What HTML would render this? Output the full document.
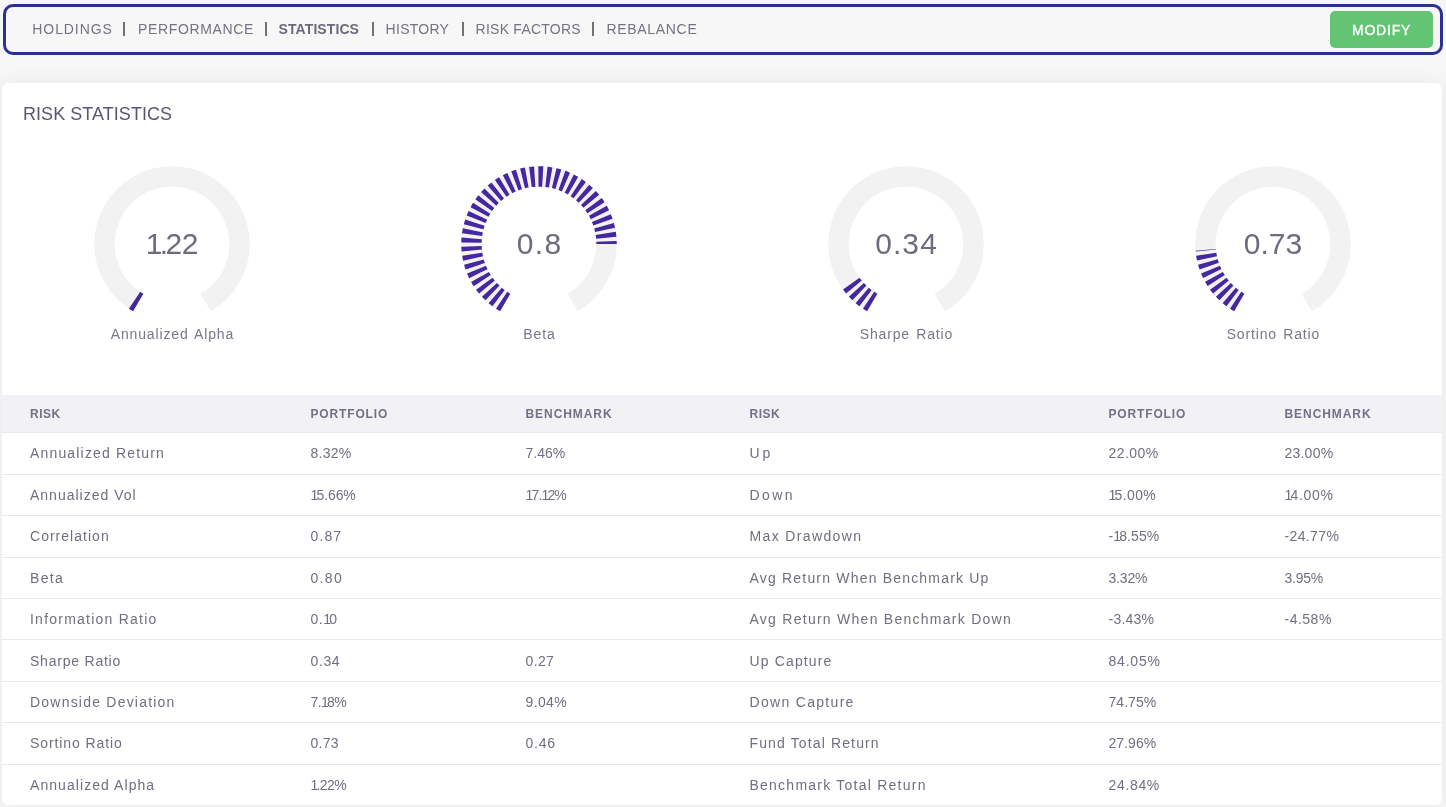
<!DOCTYPE html>
<html><head><meta charset="utf-8"><title>Risk Statistics</title>
<style>
html,body{margin:0;padding:0}
body{width:1446px;height:807px;overflow:hidden;background:#f7f7f7;position:relative;font-family:"Liberation Sans",sans-serif}
.t{position:absolute;line-height:0;white-space:nowrap}
.layer{position:absolute;left:0;top:0;width:1446px;height:807px;will-change:transform}
.nav{color:#757383}
.nav.b{font-weight:bold;color:#6b697c}
.navbar{position:absolute;left:3px;top:4px;width:1434px;height:45px;border:3px solid #2d3192;border-radius:10px;background:#f7f7f7}
.sep{position:absolute;top:22px;width:2px;height:14px;background:#717171}
.btn{position:absolute;left:1330px;top:11px;width:103px;height:37px;background:#63c574;border-radius:5px}
.btntxt{color:#fff;font-weight:normal;-webkit-text-stroke:0.35px #fff}
.card{position:absolute;left:2px;top:83px;width:1440px;height:722px;background:#fff;border-radius:6px;box-shadow:0 0 20px rgba(0,0,0,0.07)}
.title{color:#5c5574}
svg{position:absolute;left:0;top:0}
.gv{position:absolute;width:200px;text-align:center;font-size:30px;line-height:0;color:#6d6b7e}
.gl{position:absolute;width:200px;text-align:center;font-size:14px;line-height:0;color:#78768a;letter-spacing:0.85px;word-spacing:1.5px;text-indent:0.85px}
.hbg{position:absolute;left:2px;top:395px;width:1440px;height:37px;background:#f1f1f6}
.rb{position:absolute;left:2px;width:1440px;height:1px;background:#e9e8f0}
.hd{font-weight:bold;color:#737186}
.lab{color:#706e82}
.num{color:#706e82}
.num .o{letter-spacing:-1.8px}

</style></head><body><div class="layer">
<div class="navbar"></div>
<div class="t nav " style="left:32.30px;top:29.15px;font-size:14px;letter-spacing:0.92px">HOLDINGS</div><div class="t nav " style="left:138.00px;top:29.15px;font-size:14px;letter-spacing:0.64px">PERFORMANCE</div><div class="t nav b" style="left:278.60px;top:29.15px;font-size:14px;letter-spacing:0.08px">STATISTICS</div><div class="t nav " style="left:385.60px;top:29.15px;font-size:14px;letter-spacing:0.27px">HISTORY</div><div class="t nav " style="left:475.60px;top:29.15px;font-size:14px;letter-spacing:0.24px">RISK FACTORS</div><div class="t nav " style="left:606.40px;top:29.15px;font-size:14px;letter-spacing:0.69px">REBALANCE</div><div class="sep" style="left:123px"></div><div class="sep" style="left:265px"></div><div class="sep" style="left:372px"></div><div class="sep" style="left:462px"></div><div class="sep" style="left:592px"></div>
<div class="btn"></div>
<div class="t btntxt" style="left:1352.00px;top:30.15px;font-size:14px;letter-spacing:0.78px">MODIFY</div>
<div class="card"></div>
<div class="t title" style="left:23.00px;top:113.76px;font-size:18px;letter-spacing:0.05px">RISK STATISTICS</div>
<svg width="1446" height="807" viewBox="0 0 1446 807">
<path d="M138.225 302.500A67.55 67.55 0 1 1 205.775 302.500" stroke="#f2f2f2" stroke-width="20.4" fill="none"/><path d="M138.225 302.500A67.55 67.55 0 0 1 134.227 300.001" stroke="#4527a0" stroke-width="20.4" fill="none" stroke-dasharray="4.3 3.7"/><path d="M505.225 302.500A67.55 67.55 0 1 1 572.775 302.500" stroke="#f2f2f2" stroke-width="20.4" fill="none"/><path d="M505.225 302.500A67.55 67.55 0 1 1 606.550 244.000" stroke="#4527a0" stroke-width="20.4" fill="none" stroke-dasharray="4.3 3.7"/><path d="M872.225 302.500A67.55 67.55 0 1 1 939.775 302.500" stroke="#f2f2f2" stroke-width="20.4" fill="none"/><path d="M872.225 302.500A67.55 67.55 0 0 1 849.999 281.773" stroke="#4527a0" stroke-width="20.4" fill="none" stroke-dasharray="4.3 3.7"/><path d="M1239.225 302.500A67.55 67.55 0 1 1 1306.775 302.500" stroke="#f2f2f2" stroke-width="20.4" fill="none"/><path d="M1239.225 302.500A67.55 67.55 0 0 1 1205.707 249.887" stroke="#4527a0" stroke-width="20.4" fill="none" stroke-dasharray="4.3 3.7"/>
</svg>
<div class="gv" style="left:72px;top:243.80px;text-indent:-0.5px"><span style="letter-spacing:-2.6px">1</span><span style="letter-spacing:-2.6px">.</span><span style="letter-spacing:-0.5px">22</span></div><div class="gl" style="left:72px;top:334.05px">Annualized Alpha</div><div class="gv" style="left:439px;top:243.80px;letter-spacing:1.39px;text-indent:1.39px">0.8</div><div class="gl" style="left:439px;top:334.05px">Beta</div><div class="gv" style="left:806px;top:243.80px;letter-spacing:1.1px;text-indent:1.1px">0.34</div><div class="gl" style="left:806px;top:334.05px">Sharpe Ratio</div><div class="gv" style="left:1173px;top:243.80px;letter-spacing:0.0px;text-indent:0.0px">0.73</div><div class="gl" style="left:1173px;top:334.05px">Sortino Ratio</div>
<div class="hbg"></div>
<div class="rb" style="top:432px"></div>
<div class="t hd" style="left:30.00px;top:414.34px;font-size:12px;letter-spacing:0.5px">RISK</div><div class="t hd" style="left:310.50px;top:414.34px;font-size:12px;letter-spacing:0.85px">PORTFOLIO</div><div class="t hd" style="left:525.50px;top:414.34px;font-size:12px;letter-spacing:0.93px">BENCHMARK</div><div class="t hd" style="left:749.50px;top:414.34px;font-size:12px;letter-spacing:0.5px">RISK</div><div class="t hd" style="left:1108.50px;top:414.34px;font-size:12px;letter-spacing:0.85px">PORTFOLIO</div><div class="t hd" style="left:1284.50px;top:414.34px;font-size:12px;letter-spacing:0.93px">BENCHMARK</div>
<div class="t lab" style="left:30.00px;top:452.95px;font-size:14px;letter-spacing:1.169px">Annualized Return</div><div class="t num" style="left:310.50px;top:452.95px;font-size:14px;letter-spacing:0.225px">8.32%</div><div class="t num" style="left:525.50px;top:452.95px;font-size:14px;letter-spacing:-0.025px">7.46%</div><div class="t lab" style="left:749.50px;top:452.95px;font-size:14px;letter-spacing:2.89px">Up</div><div class="t num" style="left:1108.50px;top:452.95px;font-size:14px;letter-spacing:0.42px">22.00%</div><div class="t num" style="left:1284.50px;top:452.95px;font-size:14px;letter-spacing:0.22px">23.00%</div><div class="rb" style="top:474px"></div><div class="t lab" style="left:30.00px;top:494.51px;font-size:14px;letter-spacing:0.999px">Annualized Vol</div><div class="t num" style="left:310.50px;top:494.51px;font-size:14px;letter-spacing:-0.1px"><span class="o">1</span>5.66%</div><div class="t num" style="left:525.50px;top:494.51px;font-size:14px;letter-spacing:-0.9px"><span class="o">1</span>7.<span class="o">1</span>2%</div><div class="t lab" style="left:749.50px;top:494.51px;font-size:14px;letter-spacing:2.398px">Down</div><div class="t num" style="left:1108.50px;top:494.51px;font-size:14px;letter-spacing:0.4px"><span class="o">1</span>5.00%</div><div class="t num" style="left:1284.50px;top:494.51px;font-size:14px;letter-spacing:0.68px"><span class="o">1</span>4.00%</div><div class="rb" style="top:515px"></div><div class="t lab" style="left:30.00px;top:536.07px;font-size:14px;letter-spacing:1.021px">Correlation</div><div class="t num" style="left:310.50px;top:536.07px;font-size:14px;letter-spacing:1.1px">0.87</div><div class="t lab" style="left:749.50px;top:536.07px;font-size:14px;letter-spacing:1.365px">Max Drawdown</div><div class="t num" style="left:1108.50px;top:536.07px;font-size:14px;letter-spacing:0.066px">-<span class="o">1</span>8.55%</div><div class="t num" style="left:1284.50px;top:536.07px;font-size:14px;letter-spacing:0.366px">-24.77%</div><div class="rb" style="top:557px"></div><div class="t lab" style="left:30.00px;top:577.63px;font-size:14px;letter-spacing:1.329px">Beta</div><div class="t num" style="left:310.50px;top:577.63px;font-size:14px;letter-spacing:1.334px">0.80</div><div class="t lab" style="left:749.50px;top:577.63px;font-size:14px;letter-spacing:1.191px">Avg Return When Benchmark Up</div><div class="t num" style="left:1108.50px;top:577.63px;font-size:14px;letter-spacing:-0.175px">3.32%</div><div class="t num" style="left:1284.50px;top:577.63px;font-size:14px;letter-spacing:-0.25px">3.95%</div><div class="rb" style="top:598px"></div><div class="t lab" style="left:30.00px;top:619.19px;font-size:14px;letter-spacing:1.23px">Information Ratio</div><div class="t num" style="left:310.50px;top:619.19px;font-size:14px;letter-spacing:0.499px">0.<span class="o">1</span>0</div><div class="t lab" style="left:749.50px;top:619.19px;font-size:14px;letter-spacing:1.264px">Avg Return When Benchmark Down</div><div class="t num" style="left:1108.50px;top:619.19px;font-size:14px;letter-spacing:0.22px">-3.43%</div><div class="t num" style="left:1284.50px;top:619.19px;font-size:14px;letter-spacing:0.5px">-4.58%</div><div class="rb" style="top:639px"></div><div class="t lab" style="left:30.00px;top:660.75px;font-size:14px;letter-spacing:0.779px">Sharpe Ratio</div><div class="t num" style="left:310.50px;top:660.75px;font-size:14px;letter-spacing:0.6px">0.34</div><div class="t num" style="left:525.50px;top:660.75px;font-size:14px;letter-spacing:0.367px">0.27</div><div class="t lab" style="left:749.50px;top:660.75px;font-size:14px;letter-spacing:1.144px">Up Capture</div><div class="t num" style="left:1108.50px;top:660.75px;font-size:14px;letter-spacing:0.8px">84.05%</div><div class="rb" style="top:681px"></div><div class="t lab" style="left:30.00px;top:702.31px;font-size:14px;letter-spacing:1.215px">Downside Deviation</div><div class="t num" style="left:310.50px;top:702.31px;font-size:14px;letter-spacing:-0.6px">7.<span class="o">1</span>8%</div><div class="t num" style="left:525.50px;top:702.31px;font-size:14px;letter-spacing:0.35px">9.04%</div><div class="t lab" style="left:749.50px;top:702.31px;font-size:14px;letter-spacing:1.309px">Down Capture</div><div class="t num" style="left:1108.50px;top:702.31px;font-size:14px;letter-spacing:0.04px">74.75%</div><div class="rb" style="top:722px"></div><div class="t lab" style="left:30.00px;top:743.27px;font-size:14px;letter-spacing:0.913px">Sortino Ratio</div><div class="t num" style="left:310.50px;top:743.27px;font-size:14px;letter-spacing:0.3px">0.73</div><div class="t num" style="left:525.50px;top:743.27px;font-size:14px;letter-spacing:0.767px">0.46</div><div class="t lab" style="left:749.50px;top:743.27px;font-size:14px;letter-spacing:1.131px">Fund Total Return</div><div class="t num" style="left:1108.50px;top:743.27px;font-size:14px;letter-spacing:0.04px">27.96%</div><div class="rb" style="top:764px"></div><div class="t lab" style="left:30.00px;top:785.43px;font-size:14px;letter-spacing:1.061px">Annualized Alpha</div><div class="t num" style="left:310.50px;top:785.43px;font-size:14px;letter-spacing:-0.6px"><span class="o">1</span>.22%</div><div class="t lab" style="left:749.50px;top:785.43px;font-size:14px;letter-spacing:1.238px">Benchmark Total Return</div><div class="t num" style="left:1108.50px;top:785.43px;font-size:14px;letter-spacing:0.66px">24.84%</div>
</div></body></html>
